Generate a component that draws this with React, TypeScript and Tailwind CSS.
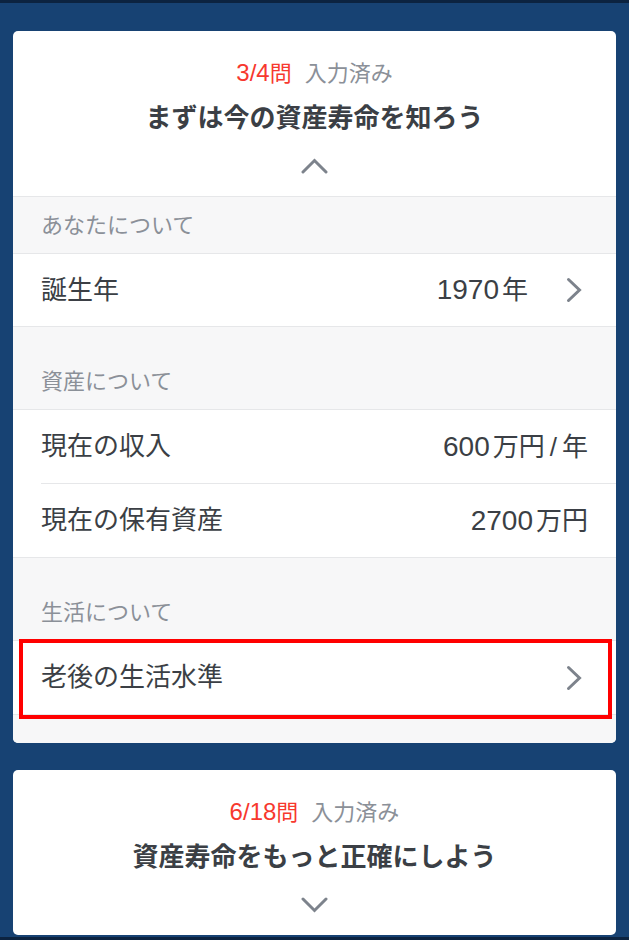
import React from 'react';

// --- Small drawing helpers ---
const ChevronRight = () => (
    <svg width="16" height="26" viewBox="0 0 16 26" fill="none" className="shrink-0">
        <path d="M2.5 2.5 L13.5 13 L2.5 23.5" stroke="#7d838c" strokeWidth="3" strokeLinecap="round" />
    </svg>
);

const ChevronVertical = ({ up }: { up: boolean }) => (
    <svg width="27" height="16" viewBox="0 0 27 16" fill="none">
        {up ? (
            <path d="M2 14 L13.5 2.5 L25 14" stroke="#7d838c" strokeWidth="3" strokeLinecap="round" />
        ) : (
            <path d="M2 2 L13.5 13.5 L25 2" stroke="#7d838c" strokeWidth="3" strokeLinecap="round" />
        )}
    </svg>
);

// --- Card header with progress + title ---
const CardHeader = ({ done, total, title, open }: { done: number, total: number, title: string, open: boolean }) => (
    <div className={`flex flex-col items-center pt-[28px] ${open ? 'h-[166px] border-b border-[#e6e7e9]' : 'h-[165px]'}`}>
        <p className="h-[28px] leading-[28px] text-[22px]">
            <span className="text-[#f7382e]"><span className="text-[24px]">{done}/{total}</span>問</span>
            <span className="ml-[13px] text-[#8b9098]">入力済み</span>
        </p>
        <h2 className="mt-[13px] leading-[36px] text-[26px] font-bold text-[#3b3f45]">{title}</h2>
        <div className="mt-[22px]">
            <ChevronVertical up={open} />
        </div>
    </div>
);

const SectionLabel = ({ label, tall = false }: { label: string, tall?: boolean }) => (
    <div className={`flex items-end bg-[#f7f7f8] border-b border-[#e6e7e9] px-[28px] pb-[13px] ${tall ? 'h-[83px]' : 'h-[57px]'}`}>
        <span className="leading-[28px] text-[22px] text-[#8b9098]">{label}</span>
    </div>
);

const Row = ({ label, children, chevron = false, inset = false, h = 'h-[74px]' }: { label: string, children?: React.ReactNode, chevron?: boolean, inset?: boolean, h?: string }) => (
    <div className={`bg-white ${inset ? 'pl-[28px]' : ''}`}>
        <div className={`flex items-center justify-between border-b border-[#e6e7e9] ${h} ${inset ? 'pr-[28px]' : 'px-[28px]'}`}>
            <span className="text-[26px] text-[#3b3f45]">{label}</span>
            <div className="flex items-center">
                {children && <span className="flex items-baseline text-[26px] text-[#3b3f45]">{children}</span>}
                {chevron && <span className="ml-[38px] mr-[6px]"><ChevronRight /></span>}
            </div>
        </div>
    </div>
);

const Num = ({ n }: { n: string }) => <span className="text-[28px] mr-[3px]">{n}</span>;

export default function App() {
    return (
        <div className="w-[629px] h-[940px] overflow-hidden bg-[#174273] font-['Liberation_Sans','Noto_Sans_CJK_JP',sans-serif]">
            <div className="h-[3px] bg-[#0c2340]" />

            <div className="px-[13px] pt-[28px]">
                {/* 1. Basic questions (open) */}
                <section className="bg-white rounded-[5px] overflow-hidden">
                    <CardHeader done={3} total={4} title="まずは今の資産寿命を知ろう" open />

                    <SectionLabel label="あなたについて" />
                    <Row label="誕生年" chevron h="h-[73px]">
                        <Num n="1970" />年
                    </Row>

                    <SectionLabel label="資産について" tall />
                    <Row label="現在の収入" inset>
                        <Num n="600" />万円<span className="mx-[5px]">/</span>年
                    </Row>
                    <Row label="現在の保有資産">
                        <Num n="2700" />万円
                    </Row>

                    <SectionLabel label="生活について" tall />
                    <div className="relative">
                        <Row label="老後の生活水準" chevron />
                        <div className="absolute left-[6px] right-[4px] top-[-2px] bottom-[-4px] border-[4px] border-[#ff0000]" />
                    </div>
                    <div className="h-[28px] bg-[#f7f7f8]" />
                </section>

                {/* 2. Detailed questions (closed) */}
                <section className="mt-[27px] bg-white rounded-[5px] overflow-hidden">
                    <CardHeader done={6} total={18} title="資産寿命をもっと正確にしよう" open={false} />
                </section>
            </div>

            <div className="mt-[2px] h-[3px] bg-[#0c2340]" />
        </div>
    );
}
